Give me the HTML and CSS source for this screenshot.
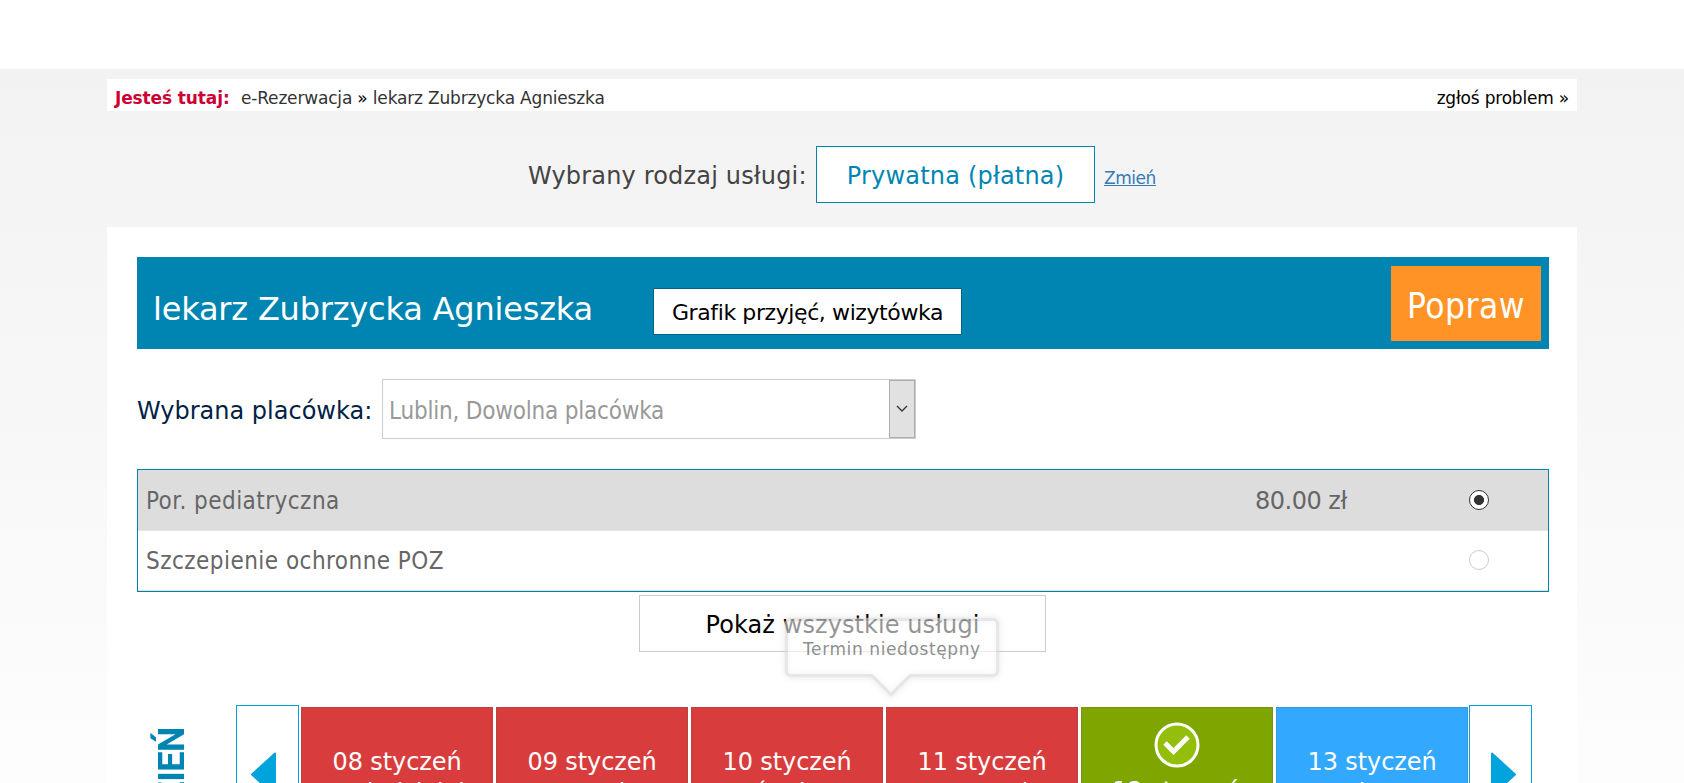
FILE: index.html
```html
<!DOCTYPE html>
<html lang="pl">
<head>
<meta charset="utf-8">
<title>e-Rezerwacja</title>
<link rel="stylesheet" href="styles.css">
</head>
<body>
<div class="page">
  <div class="container">
    <nav class="crumbs">
      <span class="crumbs-label">Jesteś tutaj:</span>
      <span class="crumbs-path">e-Rezerwacja <b class="sep">»</b> lekarz Zubrzycka Agnieszka</span>
      <a class="report">zgłoś problem »</a>
    </nav>
    <div class="service">
      <span class="service-label">Wybrany rodzaj usługi:</span>
      <span class="service-box">Prywatna (płatna)</span>
      <a class="change">Zmień</a>
    </div>
    <main class="card">
      <header class="doctor">
        <h1 class="doctor-name">lekarz Zubrzycka Agnieszka</h1>
        <a class="schedule">Grafik przyjęć, wizytówka</a>
        <a class="fix">Popraw</a>
      </header>
      <div class="place">
        <span class="place-label">Wybrana placówka:</span>
        <div class="select">
          <span class="select-text">Lublin, Dowolna placówka</span>
          <span class="select-arrow"><svg width="12" height="8" viewBox="0 0 12 8"><path d="M1 1l5 5 5-5" fill="none" stroke="#333" stroke-width="1.3"/></svg></span>
        </div>
      </div>
      <div class="services">
        <div class="row row-on"><span class="row-name">Por. pediatryczna</span><span class="price">80.00 zł</span><span class="radio radio-on"></span></div>
        <div class="row"><span class="row-name">Szczepienie ochronne POZ</span><span class="radio"></span></div>
      </div>
      <div class="all-wrap">
        <a class="all">Pokaż wszystkie usługi</a>
        <div class="tooltip">
          <svg class="tooltip-shape" width="230" height="100" viewBox="0 0 230 100">
            <path class="tip-edge" d="M13 9.500H215a4.500 4.500 0 0 1 4.500 4.500V61a4.500 4.500 0 0 1-4.500 4.500H132L113 84.500 94 65.500H13A4.500 4.500 0 0 1 8.500 61V14A4.500 4.500 0 0 1 13 9.500z"/>
            <path class="tip-fill" d="M13 11H215a3 3 0 0 1 3 3V61a3 3 0 0 1-3 3H131.500L113 82.500 94.500 64H13A3 3 0 0 1 10 61V14A3 3 0 0 1 13 11z"/>
          </svg>
          <span class="tooltip-text">Termin niedostępny</span>
        </div>
      </div>
      <div class="calendar">
        <div class="day-label"><span>DZIEŃ</span></div>
        <a class="nav"><svg width="27" height="46" viewBox="0 0 27 46"><path d="M25 1.500V43.500L2 22.500z" fill="#00a3dc" stroke="#00a3dc" stroke-width="2" stroke-linejoin="round"/></svg></a>
        <div class="days">
          <div class="day red"><span>08 styczeń</span><span>poniedziałek</span></div>
          <div class="day red"><span>09 styczeń</span><span>wtorek</span></div>
          <div class="day red"><span>10 styczeń</span><span>środa</span></div>
          <div class="day red"><span>11 styczeń</span><span>czwartek</span></div>
          <div class="day green">
            <svg class="check" width="46" height="46" viewBox="0 0 46 46"><circle cx="23" cy="23" r="21" fill="#93bf0c" stroke="#fff" stroke-width="3"/><path d="M11 21l8.500 8.500L34 15" fill="none" stroke="#fff" stroke-width="4.800"/></svg>
            <span>12 styczeń</span><span>piątek</span></div>
          <div class="day blue"><span>13 styczeń</span><span>sobota</span></div>
        </div>
        <a class="nav nav-next"><svg width="27" height="46" viewBox="0 0 27 46"><path d="M2 1.500V43.500L25 22.500z" fill="#00a3dc" stroke="#00a3dc" stroke-width="2" stroke-linejoin="round"/></svg></a>
      </div>
    </main>
  </div>
</div>
</body>
</html>
```
FILE: styles.css
```css
* { box-sizing: border-box; }
body {
  margin: 0;
  height: 783px;
  overflow: hidden;
  font-family: "DejaVu Sans", sans-serif;
  background: #fff;
  white-space: nowrap;
}
.page {
  margin-top: 69px;
  height: 714px;
  padding-top: 10px;
  background: linear-gradient(#f2f2f2, #fdfdfd);
  overflow: hidden;
}
.container { width: 1470px; margin: 0 auto; }
.crumbs {
  display: flex;
  align-items: center;
  height: 32px;
  padding: 6px 8px 0;
  background: #fff;
  font-size: 17px;
}
.crumbs-label { color: #cc0033; font-weight: bold; width: 126px; letter-spacing: -.12px; }
.crumbs-path { color: #333; letter-spacing: -.18px; }
.sep { color: #000; font-weight: normal; }
.report { margin-left: auto; color: #000; letter-spacing: -.2px; }
.service {
  display: flex;
  align-items: center;
  height: 116px;
  padding: 10px 0 0 421px;
  font-size: 24px;
}
.service-label { width: 288px; padding-top: 4px; color: #444; letter-spacing: .17px; }
.service-box {
  display: flex;
  align-items: center;
  justify-content: center;
  width: 279px;
  height: 57px;
  padding-top: 3px;
  border: 1px solid #0085b2;
  background: #fff;
  color: #0085b2;
  letter-spacing: .2px;
}
.change { margin: 8px 0 0 9px; font-size: 17px; letter-spacing: -.45px; color: #337ab7; text-decoration: underline; }
.card { height: 600px; padding: 30px 28px 0 30px; background: #fff; }
.doctor {
  display: flex;
  height: 92px;
  padding: 9px 8px 0 16px;
  background: #0085b2;
}
.doctor-name {
  width: 500px;
  margin: 24px 0 0;
  font-size: 32px;
  line-height: 38px;
  font-weight: normal;
  letter-spacing: -.2px;
  color: #fff;
}
.schedule {
  display: flex;
  align-items: center;
  justify-content: center;
  width: 309px;
  height: 47px;
  margin-top: 22px;
  padding-top: 2px;
  border: 1px solid #006688;
  background: #fff;
  font-size: 22px;
  letter-spacing: -.4px;
}
.fix {
  display: flex;
  align-items: center;
  justify-content: center;
  width: 150px;
  height: 75px;
  margin-left: auto;
  padding-top: 4px;
  background: #ff9326;
  color: #fff;
  font-family: "DejaVu Sans Condensed", "DejaVu Sans", sans-serif;
  font-stretch: condensed;
  font-size: 35px;
  letter-spacing: .5px;
}
.place { display: flex; align-items: center; height: 60px; margin-top: 30px; font-size: 24px; }
.place-label { width: 245px; padding-top: 4px; color: #002244; letter-spacing: 0; }
.select { display: flex; width: 534px; height: 60px; border: 1px solid #ccc; }
.select-text {
  flex: 1;
  padding: 17px 0 0 6px;
  color: #999;
  font-family: "DejaVu Sans Condensed", "DejaVu Sans", sans-serif;
  font-stretch: condensed;
  letter-spacing: -.2px;
}
.select-arrow {
  display: flex;
  align-items: center;
  justify-content: center;
  width: 26px;
  border: 1px solid #adadad;
  background: #e1e1e1;
}
.services { height: 123px; margin-top: 30px; border: 1px solid #0085b2; }
.row {
  display: flex;
  align-items: center;
  height: 60px;
  padding: 0 59px 0 8px;
  border-bottom: 1px solid #ddd;
  font-size: 24px;
  color: #666;
}
.row-name {
  font-family: "DejaVu Sans Condensed", "DejaVu Sans", sans-serif;
  font-stretch: condensed;
  letter-spacing: .46px;
}
.row-on { height: 61px; background: #ddd; border-bottom-color: #e4e4e4; }
.row-on .row-name { padding-top: 2px; }
.price { margin-left: auto; width: 214px; padding-top: 2px; letter-spacing: -.5px; }
.radio { width: 20px; height: 20px; margin: 0 0 2px auto; border: 1px solid #ccc; border-radius: 50%; background: #fff; }
.radio-on { margin: 0; border-color: #333; background: radial-gradient(circle, #333 4.700px, #fff 5.300px); }
.all-wrap { position: relative; height: 113px; padding: 3px 0 0 502px; }
.all {
  display: flex;
  align-items: center;
  justify-content: center;
  width: 407px;
  height: 57px;
  padding-top: 2px;
  border: 1px solid #ccc;
  color: #000;
  font-size: 24px;
  letter-spacing: .08px;
}
.tooltip { position: absolute; left: 641px; top: 18px; width: 230px; height: 100px; }
.tooltip-shape { display: block; }
.tip-edge { fill: none; stroke: rgba(222,222,222,.6); stroke-width: 3.4; filter: drop-shadow(0 0 3px rgba(0,0,0,.2)); }
.tip-fill { fill: rgba(255,255,255,.58); }
.tooltip-text { position: absolute; left: 25px; top: 29px; font-size: 17px; line-height: 20px; letter-spacing: .6px; color: #8f8f8f; }
.calendar { display: flex; height: 180px; }
.day-label { width: 99px; }
.day-label span {
  display: block;
  margin: 22px 0 0 16px;
  writing-mode: vertical-rl;
  transform: rotate(180deg);
  font: bold 36px/38px Roboto, sans-serif;
  letter-spacing: -.5px;
  color: #0085b2;
}
.nav { width: 63px; height: 180px; padding: 46px 0 0 13px; border: 1px solid #00a3dc; }
.nav-next { margin-left: 1px; padding-left: 20px; }
.days { display: flex; gap: 3px; margin: 2px 0 0 2px; }
.day {
  display: flex;
  flex-direction: column;
  align-items: center;
  width: 192px;
  height: 180px;
  padding-top: 39px;
  border: 1px solid rgba(90,90,90,.25);
  color: #fff;
  font-size: 24px;
  line-height: 31px;
  letter-spacing: -.1px;
}
.red { background: #d93c3d; }
.green { background: #7fa600; padding-top: 14px; }
.blue { background: #33a8ff; }
.check { display: block; flex: none; margin-bottom: 8px; }
```
